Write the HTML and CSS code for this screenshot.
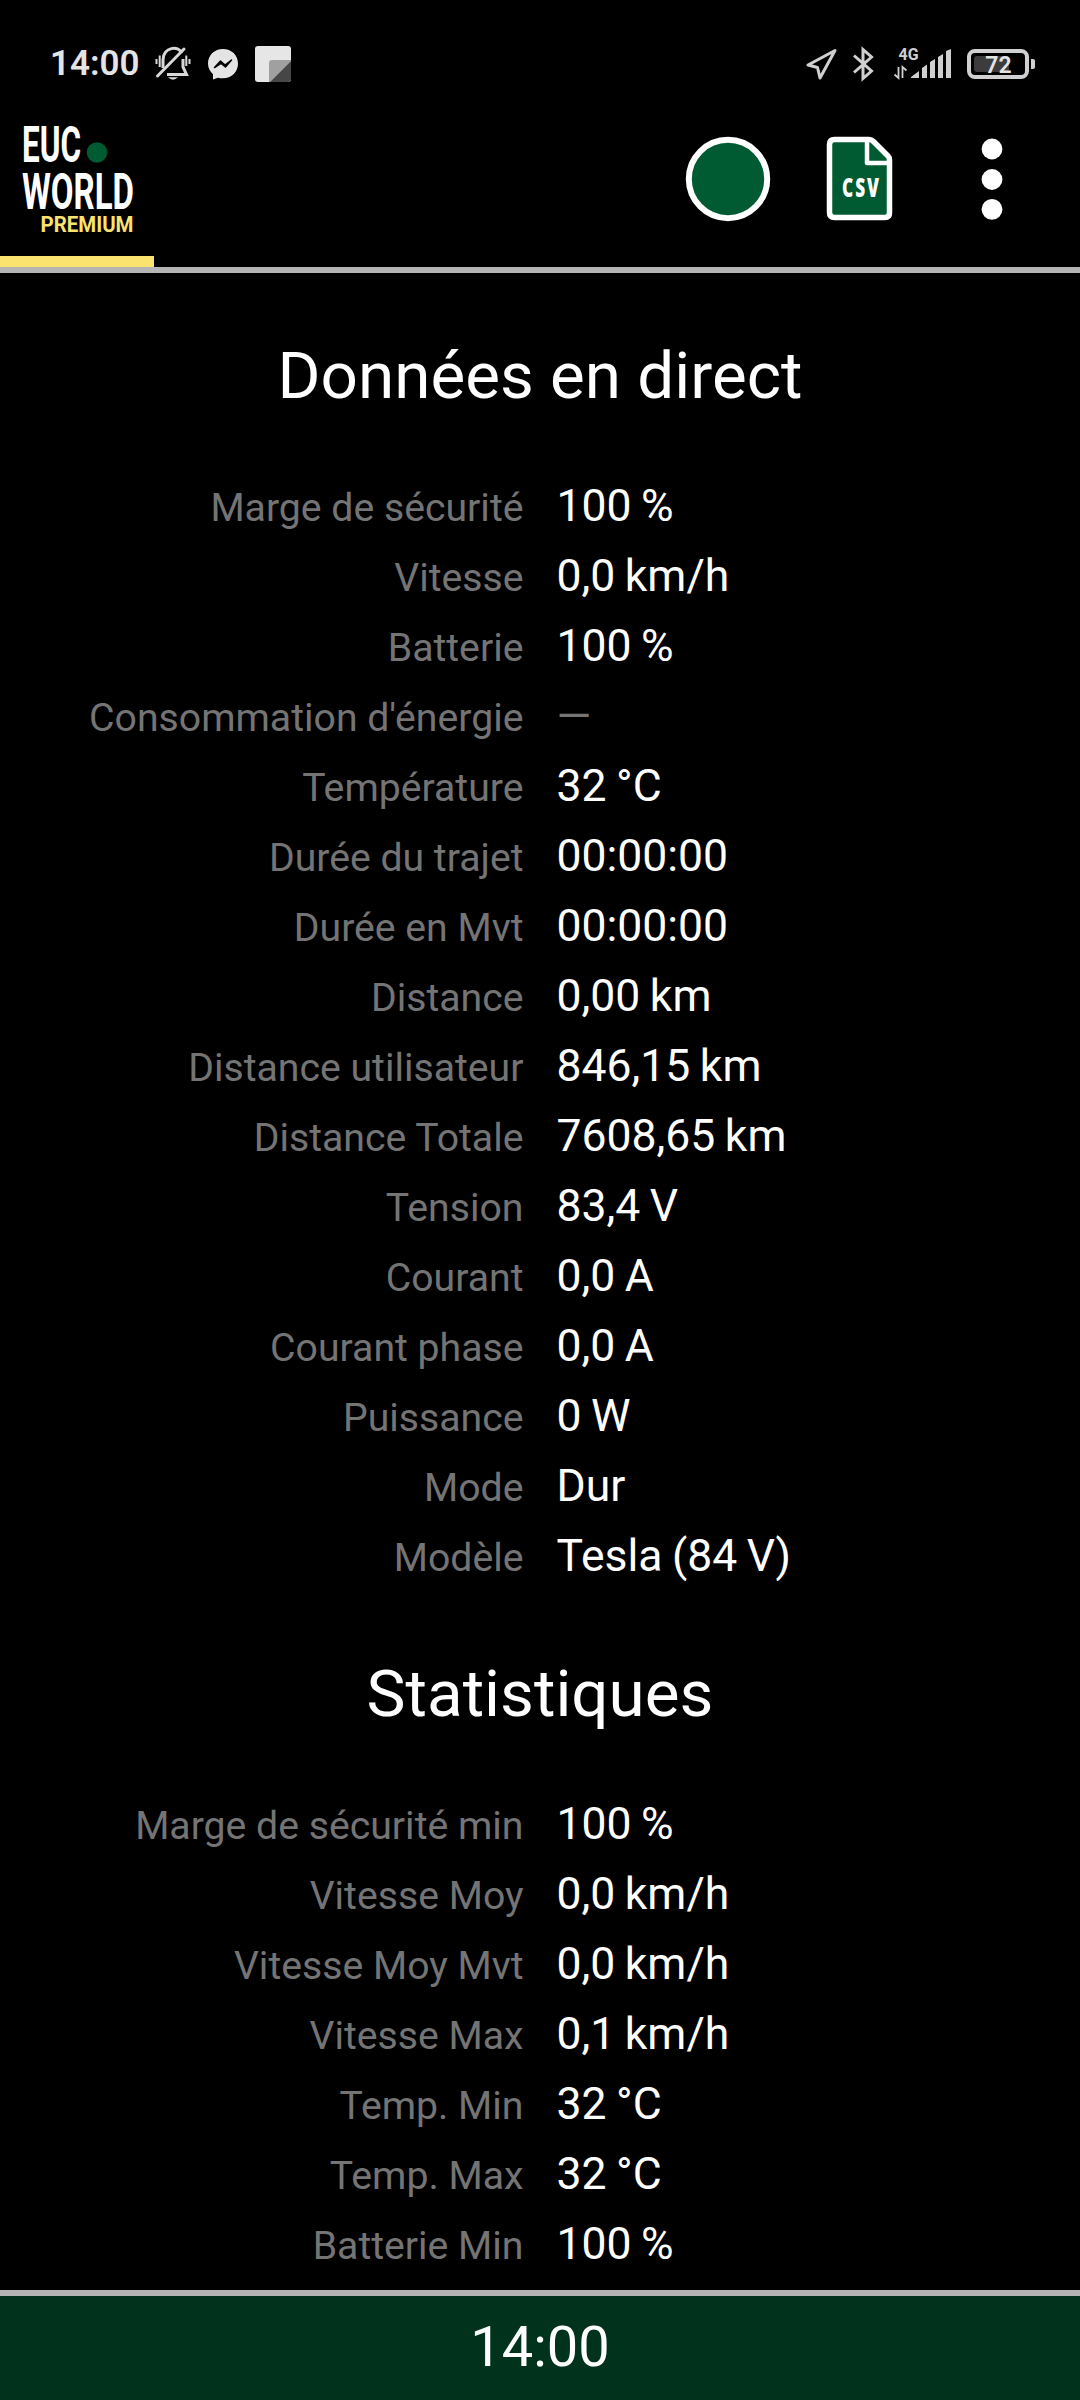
FILE: index.html
```html
<!DOCTYPE html>
<html lang="fr">
<head>
<meta charset="UTF-8" />
<meta name="viewport" content="width=device-width, initial-scale=1.0" />
<title>EUC World</title>
<link rel="stylesheet" href="styles.css">
</head>
<body>

  <!-- System status bar -->
  <div class="status-bar">
    <span class="status-time">14:00</span>
    <svg class="icon-bell" width="36" height="36" viewBox="0 0 36 36" fill="none" stroke="#d8d8d8" stroke-width="3">
      <path d="M8 22 V14 C8 1 24 -1 26.500 7 M28 13 V21 L31.500 28.500 H12" />
      <path d="M2.500 30 L29 3" stroke-linecap="round" />
      <path d="M1.500 13 V18 M4.700 9.500 V21 M34.500 13 V18 M31.300 9.500 V20" stroke-width="2" />
      <path d="M13 31.300 H23 Q18 36 13 31.300 Z" fill="#d8d8d8" stroke="none" />
    </svg>
    <svg class="icon-messenger" width="32" height="32" viewBox="0 0 32 32">
      <path d="M16 1 C7.500 1 1 7.200 1 15.400 C1 19.800 3 23.500 6 26.200 V31.500 L11 29.800 C23 32.500 31 24.500 31 15.400 C31 7.200 24.500 1 16 1 Z" fill="#e4e4e4" />
      <path d="M7.500 19.500 L13.500 13 L18 17 L24.500 12 L18.500 19 L14 15.300 Z" fill="#000" stroke="#000" stroke-width="1.500" stroke-linejoin="round" />
    </svg>
    <svg class="icon-note" width="36" height="36" viewBox="0 0 36 36">
      <rect width="36" height="36" rx="3" fill="#e6e6e6" />
      <path d="M14 36 V17 Q14 14 17 14 H36 V15 L15 36 Z" fill="#a0a0a0" />
      <path d="M36 15 V33 Q36 36 33 36 H15 Z" fill="#464646" />
    </svg>

    <div class="status-right">
      <svg class="icon-location" width="32" height="32" viewBox="0 0 32 32" fill="none" stroke="#d0d0d0" stroke-width="3" stroke-linejoin="round">
        <path d="M30 2.500 L3 17 L12.500 19.500 L15 30 Z" />
      </svg>
      <svg class="icon-bluetooth" width="22" height="36" viewBox="0 0 22 36" fill="none" stroke="#d0d0d0" stroke-width="3">
        <path d="M2 9.500 L19.500 25 L11 32.500 V3.500 L19.500 11 L2 26.500" />
      </svg>
      <svg class="icon-signal" width="60" height="34" viewBox="0 0 60 34" fill="#d0d0d0">
        <text x="5.500" y="13" textLength="20" lengthAdjust="spacingAndGlyphs" class="signal-type">4G</text>
        <path d="M5.500 20 V31 L1.500 27.500 M9.500 31 V20 L13.500 23.500" fill="none" stroke="#d0d0d0" stroke-width="1.800" />
        <path d="M18 30 L26 24 V31 H18 Z M29 21 L34 17.500 V31 H29 Z M37 15 L42 12 V31 H37 Z M45 10 L50 7 V31 H45 Z M53 4 L58 2 V31 H53 Z" />
      </svg>
      <svg class="icon-battery" width="70" height="32" viewBox="0 0 70 32">
        <rect x="3" y="3" width="58" height="26" rx="6" fill="none" stroke="#d0d0d0" stroke-width="4" />
        <rect x="8" y="8" width="35" height="16" rx="3" fill="#3c3c3c" />
        <path d="M65 11 H67 Q69 11 69 13 V19 Q69 21 67 21 H65 Z" fill="#d0d0d0" />
        <text x="32.500" y="24.500" class="battery-level">72</text>
      </svg>
    </div>
  </div>

  <!-- App header -->
  <header class="app-bar">
    <svg class="logo" width="120" height="120" viewBox="0 0 120 120">
      <text x="9" y="45" textLength="59" lengthAdjust="spacingAndGlyphs" class="logo-name">EUC</text>
      <circle cx="84" cy="35.500" r="10.300" fill="#005a32" />
      <text x="9" y="91.500" textLength="112" lengthAdjust="spacingAndGlyphs" class="logo-name">WORLD</text>
      <text x="27.500" y="115" textLength="93" lengthAdjust="spacingAndGlyphs" class="logo-plan">PREMIUM</text>
    </svg>
    <div class="actions">
      <svg class="icon-record" width="86" height="86" viewBox="0 0 86 86">
        <circle cx="43" cy="43" r="39.200" fill="#005a32" stroke="#fff" stroke-width="6" />
      </svg>
      <svg class="icon-csv" width="68" height="86" viewBox="0 0 68 86">
        <path d="M8.500 3.500 H43 Q45.500 3.500 47.500 5.500 L62 20 Q63.500 21.500 63.500 24 V77 Q63.500 81.500 59 81.500 H8.500 Q3.500 81.500 3.500 76.500 V8.500 Q3.500 3.500 8.500 3.500 Z" fill="#005a32" stroke="#fff" stroke-width="5.500" />
        <path d="M41 3.500 V27 H64" fill="none" stroke="#fff" stroke-width="4.500" stroke-linejoin="round" />
        <text x="16" y="61" textLength="39" lengthAdjust="spacingAndGlyphs" class="csv-label">CSV</text>
      </svg>
      <svg class="icon-menu" width="22" height="82" viewBox="0 0 22 82" fill="#fff">
        <circle cx="11" cy="11" r="10.400" />
        <circle cx="11" cy="41.500" r="10.400" />
        <circle cx="11" cy="71.300" r="10.400" />
      </svg>
    </div>
  </header>
  <div class="page-indicator"></div>

  <main class="content">
    <h2>Données en direct</h2>
    <dl class="readings">
      <dt>Marge de sécurité</dt><dd>100 %</dd>
      <dt>Vitesse</dt><dd>0,0 km/h</dd>
      <dt>Batterie</dt><dd>100 %</dd>
      <dt>Consommation d'énergie</dt><dd class="empty">—</dd>
      <dt>Température</dt><dd>32 °C</dd>
      <dt>Durée du trajet</dt><dd>00:00:00</dd>
      <dt>Durée en Mvt</dt><dd>00:00:00</dd>
      <dt>Distance</dt><dd>0,00 km</dd>
      <dt>Distance utilisateur</dt><dd>846,15 km</dd>
      <dt>Distance Totale</dt><dd>7608,65 km</dd>
      <dt>Tension</dt><dd>83,4 V</dd>
      <dt>Courant</dt><dd>0,0 A</dd>
      <dt>Courant phase</dt><dd>0,0 A</dd>
      <dt>Puissance</dt><dd>0 W</dd>
      <dt>Mode</dt><dd>Dur</dd>
      <dt>Modèle</dt><dd>Tesla (84 V)</dd>
    </dl>

    <h2>Statistiques</h2>
    <dl class="readings">
      <dt>Marge de sécurité min</dt><dd>100 %</dd>
      <dt>Vitesse Moy</dt><dd>0,0 km/h</dd>
      <dt>Vitesse Moy Mvt</dt><dd>0,0 km/h</dd>
      <dt>Vitesse Max</dt><dd>0,1 km/h</dd>
      <dt>Temp. Min</dt><dd>32 °C</dd>
      <dt>Temp. Max</dt><dd>32 °C</dd>
      <dt>Batterie Min</dt><dd>100 %</dd>
    </dl>
  </main>

  <footer class="clock-bar">14:00</footer>

</body>
</html>
```
FILE: styles.css
```css
* {
  box-sizing: border-box;
}

body {
  margin: 0;
  width: 1080px;
  height: 2400px;
  display: flex;
  flex-direction: column;
  overflow: hidden;
  background-color: #000;
  color: #fff;
  font-family: Roboto, "Noto Sans", sans-serif;
}

svg {
  display: block;
  flex-shrink: 0;
  overflow: visible;
}

/* Status bar */
.status-bar {
  display: flex;
  align-items: center;
  height: 110px;
  padding: 18px 44px 0 50px;
}

.status-time {
  width: 89px;
  font-size: 35px;
  font-weight: 600;
  line-height: 42px;
  color: #e4e4e4;
}

.icon-bell,
.icon-messenger,
.icon-note {
  margin-left: 16px;
}

.status-right {
  display: flex;
  align-items: center;
  margin-left: auto;
}

.icon-bluetooth {
  margin-left: 15px;
}

.icon-signal {
  margin-left: 19px;
}

.icon-battery {
  margin-left: 13px;
}

.signal-type {
  font-size: 17px;
  font-weight: 700;
}

.battery-level {
  font-size: 23px;
  font-weight: 600;
  text-anchor: middle;
  fill: #e4e4e4;
}

/* Header */
.app-bar {
  display: flex;
  align-items: flex-start;
  height: 146px;
  padding: 7px 77px 0 13px;
}

.logo-name {
  font-size: 50.500px;
  font-weight: 700;
  fill: #fff;
}

.logo-plan {
  font-size: 21.500px;
  font-weight: 700;
  fill: #fae36e;
}

.actions {
  display: flex;
  align-items: center;
  margin: 19px 0 0 auto;
}

.icon-csv {
  margin-left: 55px;
}

.icon-menu {
  margin-left: 87px;
}

.csv-label {
  font-family: "Open Sans", sans-serif;
  font-size: 26px;
  font-weight: 800;
  letter-spacing: 3px;
  fill: #fff;
}

.page-indicator {
  height: 17px;
  border-bottom: 6px solid #b4b4b4;
  background: linear-gradient(#fae36e, #fae36e) no-repeat 0 0 / 154px 11px;
}

/* Data lists */
.content {
  flex: 1;
  min-height: 0;
  overflow: hidden;
  padding-top: 58px;
}

h2 {
  margin: 0;
  font-size: 65.600px;
  font-weight: 400;
  line-height: 90px;
  text-align: center;
}

.readings {
  display: grid;
  grid-template-columns: 1fr 1fr;
  grid-auto-rows: 70px;
  column-gap: 33px;
  align-items: baseline;
  margin: 50px 0 58px;
}

dt {
  font-size: 39.200px;
  line-height: 70px;
  text-align: right;
  color: #747474;
}

dd {
  margin: 0;
  font-size: 44.500px;
  line-height: 70px;
  word-spacing: -1.500px;
}

.empty {
  color: #747474;
}

/* Bottom clock */
.clock-bar {
  height: 110px;
  border-top: 6px solid #b4b4b4;
  background-color: #00321c;
  font-size: 56px;
  line-height: 102px;
  text-align: center;
}
```
